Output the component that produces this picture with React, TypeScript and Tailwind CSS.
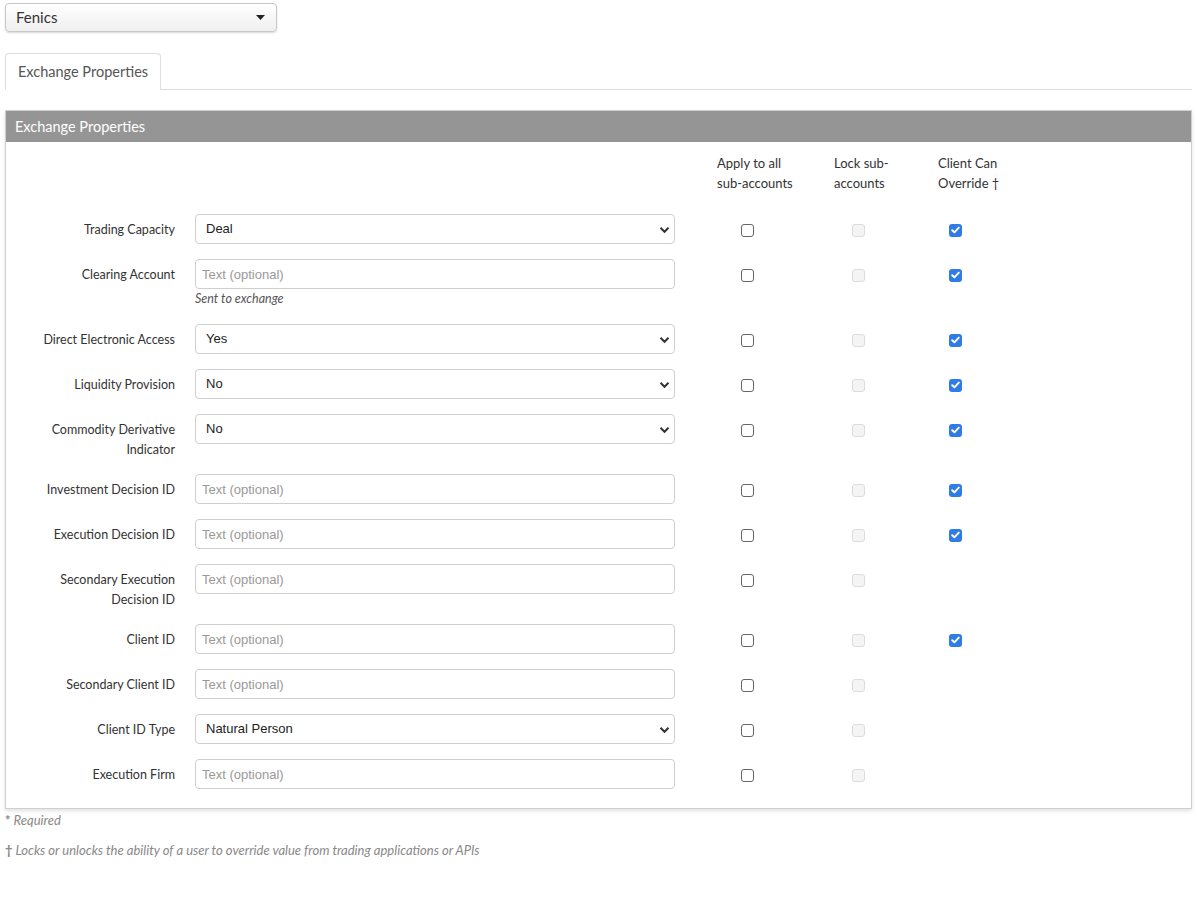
import React from "react";

type Row = {
  label: string[];
  kind: "select" | "text";
  value?: string;
  helper?: string;
  client: boolean;
};

const rows: Row[] = [
  { label: ["Trading Capacity"], kind: "select", value: "Deal", client: true },
  { label: ["Clearing Account"], kind: "text", helper: "Sent to exchange", client: true },
  { label: ["Direct Electronic Access"], kind: "select", value: "Yes", client: true },
  { label: ["Liquidity Provision"], kind: "select", value: "No", client: true },
  { label: ["Commodity Derivative", "Indicator"], kind: "select", value: "No", client: true },
  { label: ["Investment Decision ID"], kind: "text", client: true },
  { label: ["Execution Decision ID"], kind: "text", client: true },
  { label: ["Secondary Execution", "Decision ID"], kind: "text", client: false },
  { label: ["Client ID"], kind: "text", client: true },
  { label: ["Secondary Client ID"], kind: "text", client: false },
  { label: ["Client ID Type"], kind: "select", value: "Natural Person", client: false },
  { label: ["Execution Firm"], kind: "text", client: false },
];

const labelFont = "[font-family:Lato,'Open_Sans',sans-serif]";

function Chevron() {
  return (
    <svg width="11" height="8" viewBox="0 0 11 8" className="absolute right-[4px] top-[11px]">
      <path d="M1.5 1.8 L5.5 5.8 L9.5 1.8" fill="none" stroke="#333" strokeWidth="2" />
    </svg>
  );
}

function CheckEmpty() {
  return <div className="w-[13px] h-[13px] rounded-[3px] border border-[#666] bg-white" />;
}
function CheckDisabled() {
  return <div className="w-[13px] h-[13px] rounded-[3px] border border-[#dcdcdc] bg-[#f4f4f4]" />;
}
function CheckOn() {
  return (
    <div className="w-[13px] h-[13px] rounded-[3px] bg-[#2f7ce6] flex items-center justify-center">
      <svg width="9" height="8" viewBox="0 0 9 8">
        <path d="M1.2 4.2 L3.4 6.3 L7.8 1.6" fill="none" stroke="#fff" strokeWidth="1.9" strokeLinecap="round" strokeLinejoin="round" />
      </svg>
    </div>
  );
}

export default function App() {
  return (
    <div className="w-[1197px] min-h-[909px] bg-white px-[5px] pt-[3px] text-[#333] [font-family:Lato,sans-serif]">
      {/* Top dropdown */}
      <div className="w-[272px] h-[29px] rounded-[4px] border border-[#c8c8c8] bg-gradient-to-b from-white to-[#efefef] shadow-[0_1px_2px_rgba(0,0,0,0.15)] flex items-center justify-between pl-[10px] pr-[11px]">
        <span className="text-[15px] text-[#333]">Fenics</span>
        <svg width="9" height="5" viewBox="0 0 9 5">
          <path d="M0 0 L9 0 L4.5 5 Z" fill="#222" />
        </svg>
      </div>

      {/* Tabs */}
      <div className="mt-[21px] flex items-end border-b border-[#dedede]">
        <div className="h-[37px] px-[12px] border border-[#dedede] border-b-white rounded-t-[4px] -mb-px bg-white flex items-center text-[14.5px] text-[#555]">
          Exchange Properties
        </div>
      </div>

      {/* Panel */}
      <div className="mt-[20px] border border-[#cfcfcf] shadow-[0_2px_4px_rgba(0,0,0,0.12)]">
        <div className="h-[31px] bg-[#959595] text-white text-[14.5px] flex items-center pl-[9px]">
          Exchange Properties
        </div>
        <div className="pt-[11px] pb-[19px]">
          {/* Column headers */}
          <div className={`flex text-[13px] leading-[20px] ${labelFont}`}>
            <div className="w-[689px]" />
            <div className="w-[105px] pl-[22px]">
              <div>Apply to all</div>
              <div>sub-accounts</div>
            </div>
            <div className="w-[116px] pl-[34px]">
              <div>Lock sub-</div>
              <div>accounts</div>
            </div>
            <div className="w-[78px] pl-[22px] whitespace-nowrap">
              <div>Client Can</div>
              <div>Override †</div>
            </div>
          </div>

          <div className="mt-[21px] flex flex-col gap-[15px]">
            {rows.map((r, i) => (
              <div key={i} className="flex items-start">
                <div className={`w-[169px] text-right text-[12.5px] leading-[20px] pt-[6px] -mb-px ${labelFont}`}>
                  {r.label.map((l, j) => (
                    <div key={j}>{l}</div>
                  ))}
                </div>
                <div className="ml-[20px] w-[480px]">
                  {r.kind === "select" ? (
                    <div className="relative h-[30px] rounded-[4px] border border-[#cfcfcf] bg-white flex items-center pl-[10px] text-[13px] text-[#222] [font-family:'Liberation_Sans',Arial,sans-serif]">
                      {r.value}
                      <Chevron />
                    </div>
                  ) : (
                    <input
                      className="block w-full h-[30px] rounded-[4px] border border-[#cfcfcf] bg-white px-[6px] text-[13px] outline-none placeholder:text-[#999] [font-family:'Liberation_Sans',Arial,sans-serif]"
                      placeholder="Text (optional)"
                    />
                  )}
                  {r.helper && (
                    <div className={`text-[12.5px] italic text-[#555] leading-[20px] ${labelFont}`}>
                      {r.helper}
                    </div>
                  )}
                </div>
                <div className="ml-[20px] flex h-[30px] pt-[2px] items-center">
                  <div className="w-[105px] flex justify-center"><CheckEmpty /></div>
                  <div className="w-[116px] flex justify-center"><CheckDisabled /></div>
                  <div className="w-[78px] flex justify-center">{r.client ? <CheckOn /> : null}</div>
                </div>
              </div>
            ))}
          </div>
        </div>
      </div>

      {/* Footnotes */}
      <div className={`pt-[1px] text-[13px] italic text-[#888] leading-[20px] ${labelFont}`}>
        <div><span className="not-italic font-bold">*</span> Required</div>
        <div className="mt-[10px]"><span className="not-italic font-bold">†</span> Locks or unlocks the ability of a user to override value from trading applications or APIs</div>
      </div>
    </div>
  );
}
